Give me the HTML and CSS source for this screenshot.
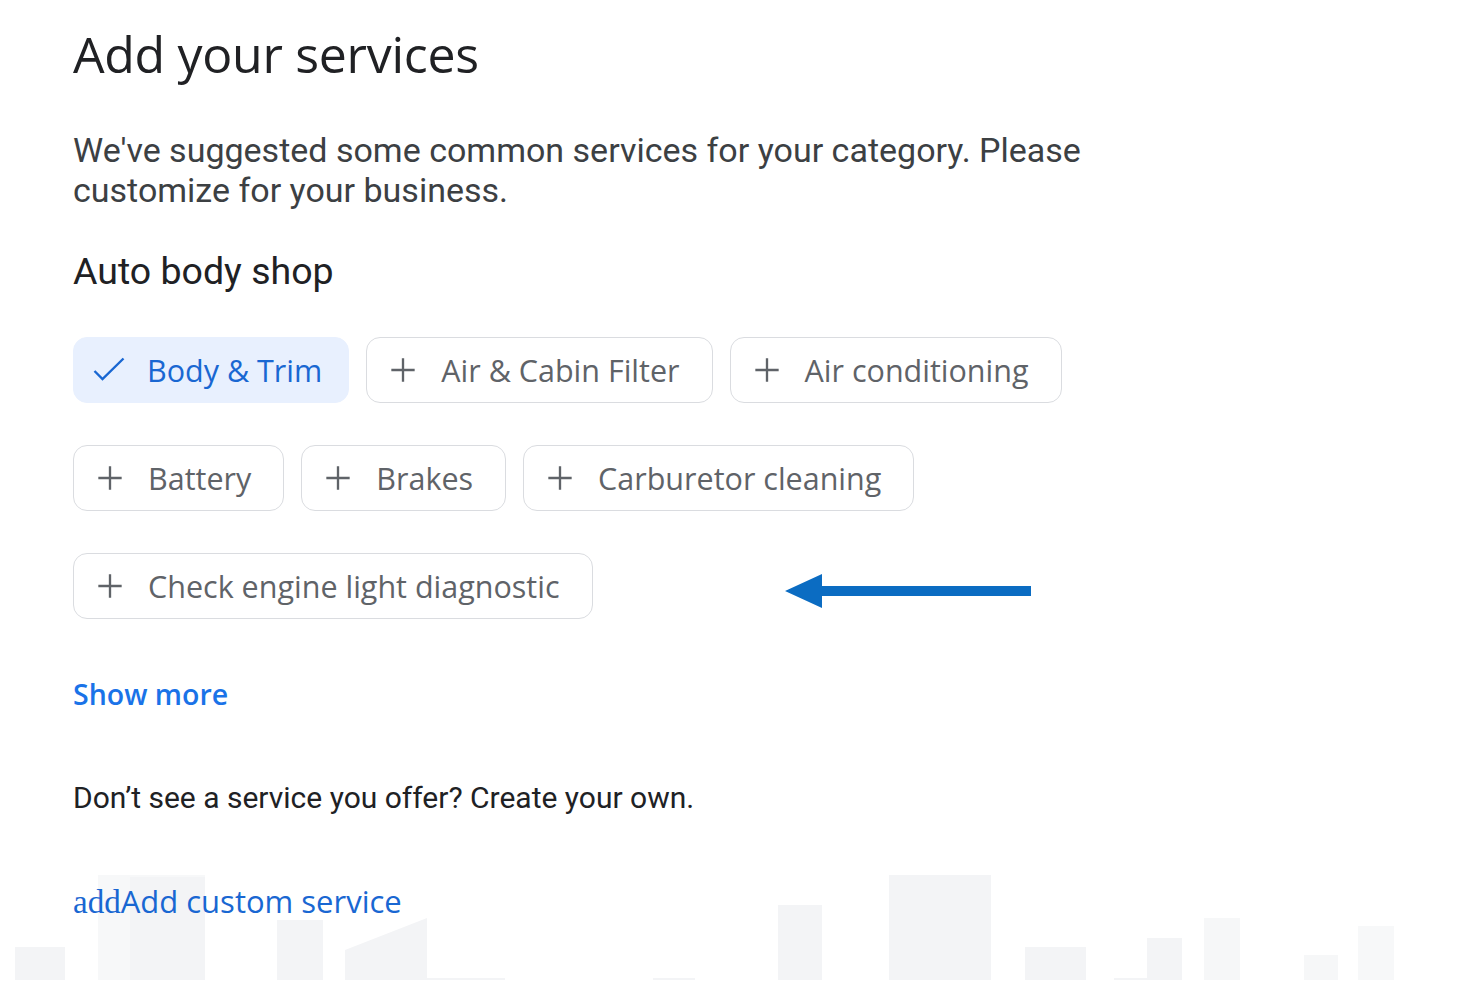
FILE: index.html
```html
<!DOCTYPE html>
<html lang="en">
<head>
<meta charset="utf-8">
<title>Add your services</title>
<link rel="stylesheet" href="styles.css">
</head>
<body>
<svg class="skyline" width="1469" height="983" viewBox="0 0 1469 983" aria-hidden="true">
  <g fill="#f3f4f6">
    <rect x="15" y="947" width="50" height="33"/>
    <rect x="98" y="875" width="107" height="105" fill="#f7f8f9"/>
    <rect x="130" y="877" width="75" height="103"/>
    <rect x="277" y="920" width="46" height="60"/>
    <polygon points="345,950 427,918 427,980 345,980"/>
    <rect x="345" y="978" width="160" height="2"/>
    <rect x="653" y="978" width="42" height="2"/>
    <rect x="778" y="905" width="44" height="75"/>
    <rect x="889" y="875" width="102" height="105"/>
    <rect x="1025" y="947" width="61" height="33"/>
    <rect x="1114" y="978" width="40" height="2"/>
    <rect x="1147" y="938" width="35" height="42"/>
    <rect x="1204" y="918" width="36" height="62" fill="#f6f7f8"/>
    <rect x="1304" y="955" width="34" height="25" fill="#f6f7f8"/>
    <rect x="1358" y="926" width="36" height="54" fill="#f7f8f9"/>
  </g>
</svg>
<main class="page">
  <h1 class="title">Add your services</h1>
  <p class="intro">We've suggested some common services for your category. Please customize for your business.</p>
  <h2 class="category">Auto body shop</h2>
  <div class="chips">
    <div class="chip-row">
      <button class="chip chip-selected">
        <svg class="chip-icon check-icon" viewBox="0 0 32 32"><path d="M1.5 17l8 8L30.5 4.5" fill="none" stroke="currentColor" stroke-width="2.4"/></svg>
        <span>Body &amp; Trim</span>
      </button>
      <button class="chip">
        <svg class="chip-icon" viewBox="0 0 24 24"><path d="M12 2v20M2 12h20" fill="none" stroke="currentColor" stroke-width="2"/></svg>
        <span>Air &amp; Cabin Filter</span>
      </button>
      <button class="chip">
        <svg class="chip-icon" viewBox="0 0 24 24"><path d="M12 2v20M2 12h20" fill="none" stroke="currentColor" stroke-width="2"/></svg>
        <span>Air conditioning</span>
      </button>
    </div>
    <div class="chip-row">
      <button class="chip">
        <svg class="chip-icon" viewBox="0 0 24 24"><path d="M12 2v20M2 12h20" fill="none" stroke="currentColor" stroke-width="2"/></svg>
        <span>Battery</span>
      </button>
      <button class="chip">
        <svg class="chip-icon" viewBox="0 0 24 24"><path d="M12 2v20M2 12h20" fill="none" stroke="currentColor" stroke-width="2"/></svg>
        <span>Brakes</span>
      </button>
      <button class="chip">
        <svg class="chip-icon" viewBox="0 0 24 24"><path d="M12 2v20M2 12h20" fill="none" stroke="currentColor" stroke-width="2"/></svg>
        <span>Carburetor cleaning</span>
      </button>
    </div>
    <div class="chip-row">
      <button class="chip">
        <svg class="chip-icon" viewBox="0 0 24 24"><path d="M12 2v20M2 12h20" fill="none" stroke="currentColor" stroke-width="2"/></svg>
        <span>Check engine light diagnostic</span>
      </button>
    </div>
  </div>
  <a class="show-more" href="#">Show more</a>
  <p class="custom-hint">Don’t see a service you offer? Create your own.</p>
  <a class="add-custom" href="#"><span class="add-glyph">add</span>Add custom service</a>
</main>
<svg class="arrow" width="250" height="40" viewBox="0 0 250 40" aria-hidden="true">
  <polygon points="0,20 37,3 37,15 246,15 246,25 37,25 37,37" fill="#0b6cc2"/>
</svg>
</body>
</html>
```
FILE: styles.css
```css
html, body {
  margin: 0;
  padding: 0;
  background: #ffffff;
}
body {
  position: relative;
  width: 1469px;
  height: 983px;
  overflow: hidden;
  font-family: Roboto, "Liberation Sans", sans-serif;
}
.skyline {
  position: absolute;
  left: 0;
  top: 0;
}
.page {
  position: relative;
  padding: 20px 0 0 73px;
  display: flex;
  flex-direction: column;
  align-items: flex-start;
}
.title {
  margin: 0;
  font-family: "Open Sans", sans-serif;
  font-weight: 400;
  font-size: 50px;
  line-height: 68px;
  color: #202124;
  letter-spacing: -0.3px;
}
.intro {
  margin: 42px 0 0 0;
  width: 1080px;
  font-size: 34px;
  line-height: 40px;
  color: #3c4043;
}
.category {
  margin: 38px 0 0 0;
  font-weight: 400;
  font-size: 37.5px;
  line-height: 46px;
  color: #202124;
}
.chips {
  margin-top: 43px;
  display: flex;
  flex-direction: column;
  gap: 42px;
}
.chip-row {
  display: flex;
  gap: 17px;
}
.chip {
  display: flex;
  align-items: center;
  gap: 24px;
  height: 66px;
  box-sizing: border-box;
  padding: 0 32px 0 22px;
  border: 1.5px solid #dadce0;
  border-radius: 14px;
  background: #ffffff;
  font-family: "Open Sans", sans-serif;
  font-size: 30.5px;
  font-weight: 500;
  color: #5f6368;
  cursor: pointer;
}
.chip-icon {
  width: 28px;
  height: 28px;
  flex: none;
}
.chip-selected {
  background: #e8f0fe;
  border-color: #e8f0fe;
  color: #1967d2;
  padding-left: 19px;
  padding-right: 26px;
  gap: 22px;
}
.check-icon {
  width: 32px;
  height: 32px;
}
.show-more {
  margin-top: 56px;
  font-family: "Open Sans", sans-serif;
  font-size: 28.5px;
  font-weight: 600;
  line-height: 38px;
  color: #1a73e8;
  text-decoration: none;
}
.custom-hint {
  margin: 66px 0 0 0;
  font-size: 30px;
  line-height: 38px;
  color: #202124;
}
.add-custom {
  margin-top: 65px;
  font-family: "Open Sans", sans-serif;
  font-size: 31px;
  font-weight: 500;
  line-height: 38px;
  color: #1967d2;
  text-decoration: none;
}
.add-glyph {
  font-family: "Liberation Serif", serif;
  font-size: 33px;
  font-weight: 400;
}
.arrow {
  position: absolute;
  left: 785px;
  top: 571px;
}
```
